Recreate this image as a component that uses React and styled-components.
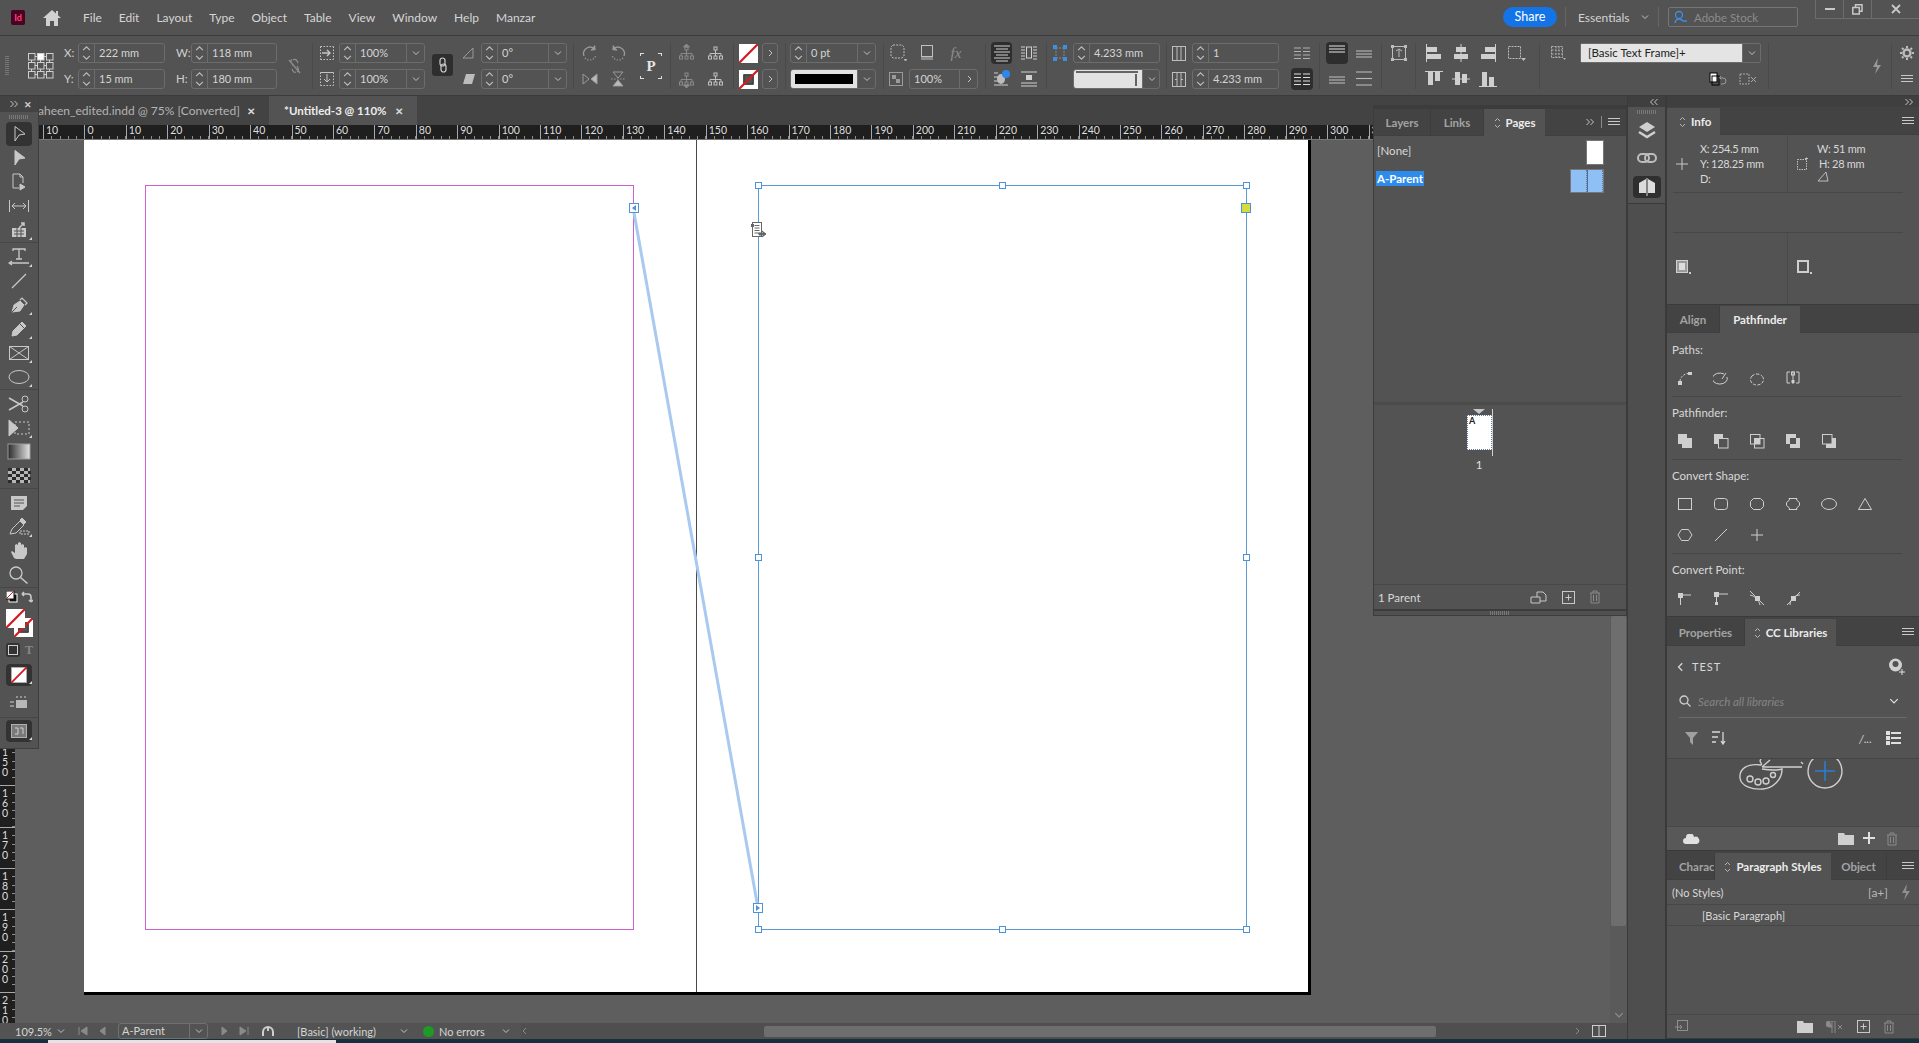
import React from 'react';
import styled, { createGlobalStyle } from 'styled-components';

const GlobalStyle = createGlobalStyle`
  html, body {
    margin: 0;
    background: #535353;
    overflow: hidden;
  }
  * { box-sizing: border-box; }
`;

const UI_FONT = `Lato, "Open Sans", "Liberation Sans", sans-serif`;

/* ---------- small drawing helpers ---------- */

const Ic = ({ w = 18, h = 18, vb, sw = 1, color = 'currentColor', children }) => (
  <svg
    width={w}
    height={h}
    viewBox={vb || `0 0 ${w} ${h}`}
    fill="none"
    stroke={color}
    strokeWidth={sw}
    style={{ display: 'block', flex: 'none' }}
  >
    {children}
  </svg>
);

const Chevron = ({ dir = 'down', size = 8, color = '#c4c4c4' }) => {
  const paths = {
    down: 'M1 2.5l3 3 3-3',
    up: 'M1 5.5l3-3 3 3',
    right: 'M3 1l3 3-3 3',
    left: 'M5 1L2 4l3 3',
  };
  return (
    <Ic w={size} h={size} vb="0 0 8 8" color={color}>
      <path d={paths[dir]} />
    </Ic>
  );
};

const UpDown = () => (
  <Ic w={7} h={12} vb="0 0 7 12" color="#b5b5b5">
    <path d="M1 4l2.5-2.5L6 4M1 8l2.5 2.5L6 8" />
  </Ic>
);

const Burger = () => (
  <Ic w={12} h={9} color="#c8c8c8">
    <path d="M0 .5h12M0 3.5h12M0 6.5h12" />
  </Ic>
);

const Double = ({ left }) => (
  <Ic w={10} h={8} color="#c4c4c4">
    {left ? <path d="M4.5 1L1.5 4l3 3M8.5 1l-3 3 3 3" /> : <path d="M1.5 1l3 3-3 3M5.5 1l3 3-3 3" />}
  </Ic>
);

const NoneSwatch = ({ size = 19, stroke, border = 0 }) => (
  <svg width={size} height={size} viewBox="0 0 20 20" style={{ display: 'block' }}>
    <rect width="20" height="20" fill="#fff" />
    {stroke && <rect x="5" y="5" width="10" height="10" fill="#535353" stroke="#222" />}
    {border > 0 && <rect x=".5" y=".5" width="19" height="19" fill="none" stroke="#999" />}
    <path d="M0 20L20 0" stroke="#cf1f25" strokeWidth="2.4" />
  </svg>
);

/* ---------- menu bar ---------- */

const Root = styled.div`
  width: 1919px;
  height: 1043px;
  display: flex;
  flex-direction: column;
  overflow: hidden;
  background: #535353;
  color: #d2d2d2;
  font-family: ${UI_FONT};
  font-size: 11.5px;
`;

const MenuBar = styled.div`
  height: 35px;
  flex: none;
  display: flex;
  align-items: center;
  padding-left: 11px;
  background: #535353;
`;

const AppLogo = styled.div`
  width: 14px;
  height: 15px;
  border-radius: 2px;
  background: #49021f;
  color: #ff3f7f;
  font-size: 9px;
  font-weight: 700;
  line-height: 15px;
  text-align: center;
`;

const HomeBtn = styled.div`
  margin: 0 22px 0 18px;
`;

const MenuList = styled.div`
  display: flex;
  gap: 17px;
  font-size: 12px;
  color: #d6d6d6;
`;

const MenuRight = styled.div`
  margin-left: auto;
  display: flex;
  align-items: flex-start;
  height: 100%;
`;

const ShareBtn = styled.div`
  width: 54px;
  height: 20px;
  margin-top: 7px;
  border-radius: 10px;
  background: #1473e6;
  color: #fff;
  font-size: 12.5px;
  line-height: 20px;
  text-align: center;
`;

const TopSep = styled.div`
  width: 1px;
  height: 20px;
  margin: 7px ${p => p.$mr}px 0 8px;
  background: #666;
`;

const Workspace = styled.div`
  display: flex;
  align-items: center;
  gap: 11px;
  height: 20px;
  margin-top: 7px;
  width: 72px;
  font-size: 12px;
`;

const StockBox = styled.div`
  width: 130px;
  height: 20px;
  margin: 7px 17px 0 0;
  padding-left: 4px;
  display: flex;
  align-items: center;
  gap: 5px;
  border: 1px solid #757575;
  border-radius: 2px;
  color: #8c8c8c;
  font-size: 11.5px;
`;

const WinControls = styled.div`
  width: 104px;
  height: 19px;
  display: flex;
  border: 1px solid #6d6d6d;
  border-top: none;
  border-right: none;
`;

const WinBtn = styled.div`
  width: ${p => p.$w}px;
  display: flex;
  align-items: center;
  justify-content: center;
  border-right: ${p => (p.$last ? 'none' : '1px solid #6d6d6d')};
`;

/* ---------- control bar ---------- */

const ControlBar = styled.div`
  height: 61px;
  flex: none;
  display: flex;
  padding-top: 7px;
  border-top: 1px solid #3b3b3b;
  border-bottom: 1px solid #3b3b3b;
  background: #535353;
`;

const Col = styled.div`
  flex: none;
  width: ${p => p.$w}px;
  margin-left: ${p => p.$ml || 0}px;
  display: flex;
  flex-direction: column;
  gap: 6px;
`;

const Cell = styled.div`
  height: 20px;
  display: flex;
  align-items: center;
  justify-content: ${p => p.$justify || 'center'};
  gap: ${p => p.$gap || 0}px;
  padding-right: ${p => p.$pr || 0}px;
  color: #c6c6c6;
`;

const Tall = styled.div`
  height: 46px;
  display: flex;
  align-items: center;
  justify-content: center;
  color: #c6c6c6;
`;

const ActiveCell = styled(Cell)`
  height: 22px;
  margin: -1px 0;
  border-radius: 4px;
  background: ${p => (p.$on ? '#2e2e2e' : 'transparent')};
`;

const Sep = styled.div`
  flex: none;
  width: 1px;
  height: 46px;
  margin-left: ${p => p.$ml || 0}px;
  background: #4a4a4a;
`;

const FieldLabel = styled.div`
  height: 20px;
  line-height: 20px;
  font-size: 11.5px;
  color: #cfcfcf;
`;

const Field = styled.div`
  height: 20px;
  display: flex;
  align-items: stretch;
  border: 1px solid #6c6c6c;
  border-radius: 3px;
  color: #d4d4d4;
  font-size: 11px;
  width: ${p => (p.$w ? `${p.$w}px` : 'auto')};
  flex: none;
`;

const Spinner = styled.div`
  width: 16px;
  flex: none;
  display: flex;
  flex-direction: column;
  align-items: center;
  justify-content: center;
  border-right: 1px solid #6c6c6c;
`;

const FieldValue = styled.div`
  flex: 1;
  padding-left: 4px;
  line-height: 18px;
  white-space: nowrap;
  overflow: hidden;
`;

const FieldDrop = styled.div`
  width: 18px;
  flex: none;
  display: flex;
  align-items: center;
  justify-content: center;
  border-left: 1px solid #6c6c6c;
`;

const FieldArrow = styled(FieldDrop)`
  width: 100%;
  border-left: none;
`;

const SwatchWell = styled.div`
  flex: 1;
  display: flex;
  align-items: center;
  background: ${p => p.$bg || '#e2e2e2'};
  padding: ${p => (p.$pad ? '4px 4px' : '0')};
  border-radius: 2px 0 0 2px;
`;

const BlackBar = styled.div`
  width: 100%;
  height: 10px;
  background: #000;
`;

const ChainBtn = styled.div`
  width: 21px;
  height: 22px;
  margin-top: 11px;
  display: flex;
  align-items: center;
  justify-content: center;
  border-radius: 3px;
  background: #2e2e2e;
`;

const GripV = styled.div`
  width: 4px;
  height: 20px;
  margin: 13px 0 0 5px;
  background: repeating-linear-gradient(180deg, #777 0 1px, transparent 1px 2px);
`;

const StyleSelect = styled.div`
  height: 20px;
  display: flex;
  border: 1px solid #6c6c6c;
  border-radius: 2px;
`;

const StyleValue = styled.div`
  flex: 1;
  padding-left: 7px;
  background: #e4e4e4;
  color: #222;
  font-size: 11.5px;
  line-height: 18px;
`;

const FxMark = styled.div`
  width: 18px;
  text-align: center;
  font-family: "Liberation Serif", serif;
  font-style: italic;
  font-size: 15px;
  color: #8f8f8f;
`;

const Spin = () => (
  <Spinner>
    <Chevron dir="up" size={9} color="#bdbdbd" />
    <Chevron dir="down" size={9} color="#bdbdbd" />
  </Spinner>
);

const NumField = ({ value, w = 86, drop }) => (
  <Field $w={w}>
    <Spin />
    <FieldValue>{value}</FieldValue>
    {drop && (
      <FieldDrop>
        <Chevron />
      </FieldDrop>
    )}
  </Field>
);

/* control bar drawings */

const RefPoint = () => (
  <Ic w={26} h={26} color="#cfcfcf">
    {[0, 9, 18].map(y =>
      [0, 9, 18].map(x => (
        <rect key={`${x}${y}`} x={x + 0.5} y={y + 0.5} width="6.5" height="6.5" fill={x === 9 && y === 0 ? '#fff' : 'none'} />
      ))
    )}
    <path d="M7 3.5h2M16 3.5h2M3.5 7v2M12.5 7v2M21.5 7v2M3.5 16v2M12.5 16v2M21.5 16v2M7 12.5h2M16 12.5h2M7 21.5h2M16 21.5h2" />
  </Ic>
);

const BrokenLink = () => (
  <Ic w={16} h={18} color="#8f8f8f" sw={1.2}>
    <path d="M5 2.5c-2 1.5-1 3 1 6M10 15c2-1 2-3 0-6M2 3l11 13" />
    <path d="M6 3c1-1 3-1 4 1l1 2M5 12l1 2c.6 1 2 1.5 3 1" />
  </Ic>
);

const ScaleW = () => (
  <Ic w={14} h={14} color="#c4c4c4">
    <path d="M.5 13.5h13" strokeDasharray="1.5 1.5" />
    <path d="M.5 .5h13M.5 .5v13M13.5 .5v13" strokeDasharray="1.5 1.5" />
    <path d="M2 7h8M7 4l3 3-3 3" strokeWidth="1.4" />
  </Ic>
);

const ScaleH = () => (
  <Ic w={14} h={14} color="#c4c4c4">
    <path d="M.5 13.5h13M.5 .5v13M13.5 .5v13" strokeDasharray="1.5 1.5" />
    <path d="M.5 .5h13M7 2v8M4 7l3 3 3-3" />
  </Ic>
);

const ChainIcon = () => (
  <Ic w={10} h={16} color="#cfcfcf" sw={1.2}>
    <rect x="2" y="1" width="5" height="8" rx="2.5" />
    <rect x="3" y="7" width="5" height="8" rx="2.5" />
  </Ic>
);

const RotateIcon = ({ flip }) => (
  <Ic w={18} h={18} color="#9a9a9a" sw={1.3}>
    <g transform={flip ? 'matrix(-1 0 0 1 18 0)' : undefined}>
      <path d="M3 12a6.5 6.5 0 0 1 10-7.5" />
      <path d="M13.5 1.5l.5 4-4 .5" fill="#9a9a9a" />
      <path d="M4 14a6.5 6.5 0 0 0 11-3" strokeDasharray="1.2 1.6" />
    </g>
  </Ic>
);

const FlipH = () => (
  <Ic w={18} h={16} color="#9a9a9a">
    <path d="M2 3l6 5-6 5z" />
    <path d="M16 3l-6 5 6 5z" fill="#bbb" />
  </Ic>
);

const FlipV = () => (
  <Ic w={16} h={18} color="#9a9a9a">
    <path d="M3 2h10L8 8z" />
    <path d="M3 16h10L8 10z" fill="#bbb" />
    <path d="M1 9h14" strokeDasharray="1.5 1.5" />
  </Ic>
);

const corner = (x, y, w, h) => `linear-gradient(#ddd, #ddd) ${x} ${y} / ${w}px ${h}px no-repeat`;

const PCorners = styled.div`
  width: 22px;
  height: 26px;
  margin-top: 10px;
  display: flex;
  align-items: center;
  justify-content: center;
  color: #e6e6e6;
  font-family: "Liberation Serif", serif;
  font-size: 15px;
  font-weight: 700;
  background:
    ${corner('left', 'top', 4, 1)}, ${corner('left', 'top', 1, 3)},
    ${corner('right', 'top', 4, 1)}, ${corner('right', 'top', 1, 3)},
    ${corner('left', 'bottom', 4, 1)}, ${corner('left', 'bottom', 1, 3)},
    ${corner('right', 'bottom', 4, 1)}, ${corner('right', 'bottom', 1, 3)};
`;

const OrgChart = ({ color = '#8a8a8a', arrow }) => (
  <Ic w={18} h={18} color={color}>
    <rect x="7" y="3" width="3" height="3" />
    <path d="M8.5 6v3M3 12V9.5h11V12M8.5 9.5V12" />
    <rect x="1.5" y="12" width="3" height="3" />
    <rect x="7" y="12" width="3" height="3" />
    <rect x="12.5" y="12" width="3" height="3" />
    {arrow === 'up' && <path d="M5.5 3l3-3 3 3z" fill={color} />}
    {arrow === 'down' && <path d="M5.5 15l3 3 3-3z" fill={color} />}
  </Ic>
);

const CornerIcon = () => (
  <Ic w={18} h={18} color="#bdbdbd">
    <path d="M4 1h9l2 2v9l-2 2H4l-2-2V3z" strokeDasharray="2 1.2" />
    <path d="M15.5 15.5h2L16.5 17z" fill="#bdbdbd" />
  </Ic>
);

const ShadowIcon = () => (
  <Ic w={16} h={18} color="#c0c0c0">
    <rect x="2.5" y="1.5" width="11" height="11" />
    <rect x="2" y="13" width="12" height="3" fill="#8a8a8a" stroke="none" />
  </Ic>
);

const WrapIcon = ({ variant }) => (
  <Ic w={18} h={18} color="#d0d0d0">
    {variant === 'a' && <path d="M1 2h16M3 5h12M1 8h16M3 11h12M1 14h16M3 17h12" />}
    {variant === 'b' && (
      <g>
        <path d="M1 3h4M13 3h4M1 6h4M13 6h4M1 9h4M13 9h4M1 12h4M13 12h4M1 15h4M13 15h4" />
        <rect x="6.5" y="3" width="5" height="11" />
      </g>
    )}
    {variant === 'c' && (
      <g>
        <path d="M1 3h4M1 7h4M1 11h4M1 15h14" />
        <ellipse cx="8" cy="9" rx="4" ry="5" fill="#bdbdbd" stroke="none" />
        <circle cx="13" cy="4" r="4" fill="#2f87e8" stroke="none" />
      </g>
    )}
    {variant === 'd' && (
      <g>
        <path d="M1 2h16M1 16h16M1 13h16" />
        <rect x="6" y="5" width="6" height="5" fill="#d0d0d0" stroke="none" />
      </g>
    )}
  </Ic>
);

const BlueInset = () => (
  <Ic w={16} h={18} color="#888">
    <path d="M4 4h8M4 14h8M4 4v10M12 4v10" strokeDasharray="2 1" />
    {[[1, 1], [1, 13], [11, 1], [11, 13]].map(([x, y]) => (
      <rect key={`${x}${y}`} x={x} y={y} width="4" height="4" fill="#3f8fe0" stroke="none" />
    ))}
  </Ic>
);

const ColumnIcon = ({ gutter }) => (
  <Ic w={14} h={15} color="#bdbdbd">
    <rect x=".5" y=".5" width="13" height="14" />
    {gutter ? (
      <path d="M5 .5v14M9 .5v14M3 7.5h2M9 7.5h2" />
    ) : (
      <path d="M5 .5v14M9 .5v14" />
    )}
  </Ic>
);

const JustifyIcon = ({ filled, lines = 4, spread }) => (
  <Ic w={18} h={16} color={filled ? '#d8d8d8' : '#b8b8b8'} sw={1.1}>
    {Array.from({ length: lines }).map((_, i) => {
      const y = spread ? 1 + (i * 13) / (lines - 1) : filled ? 1 + i * 3 : 6 + i * 3;
      return <path key={i} d={`M1 ${y}h16`} />;
    })}
  </Ic>
);

const ColList = ({ strong }) => (
  <Ic w={16} h={14} color={strong ? '#e0e0e0' : '#b0b0b0'}>
    <path d="M0 2h7M9 2h7M0 5.5h7M9 5.5h7M0 9h7M9 9h7M0 12.5h7M9 12.5h7" />
  </Ic>
);

const FitIcon = () => (
  <Ic w={18} h={18} color="#bdbdbd">
    <rect x="2.5" y="2.5" width="13" height="13" />
    {[[1, 1], [14, 1], [1, 14], [14, 14]].map(([x, y]) => (
      <rect key={`${x}${y}`} x={x} y={y} width="3" height="3" fill="#bdbdbd" stroke="none" />
    ))}
    <path d="M9 5v8M6 7l3-2 3 2" />
  </Ic>
);

const AlignIcon = ({ kind }) => {
  const shapes = {
    left: ['M1.5 0v18', [2, 3, 10, 5], [2, 10, 14, 5]],
    hcenter: ['M9 0v18', [4, 3, 10, 5], [2, 10, 14, 5]],
    right: ['M16.5 0v18', [6, 3, 10, 5], [2, 10, 14, 5]],
    top: ['M0 1.5h18', [3, 2, 5, 13], [10, 2, 5, 9]],
    vcenter: ['M0 9h18', [3, 2, 5, 13], [10, 4, 5, 9]],
    bottom: ['M0 16.5h18', [3, 2, 5, 14], [10, 7, 5, 9]],
  };
  const [line, a, b] = shapes[kind];
  return (
    <Ic w={18} h={18} color="#cfcfcf">
      <path d={line} />
      <rect x={a[0]} y={a[1]} width={a[2]} height={a[3]} fill="#cfcfcf" stroke="none" />
      <rect x={b[0]} y={b[1]} width={b[2]} height={b[3]} fill="#cfcfcf" stroke="none" />
    </Ic>
  );
};

const AlignTo = () => (
  <Ic w={20} h={18} color="#bdbdbd">
    <rect x="2.5" y="2.5" width="12" height="12" strokeDasharray="2 1" />
    <path d="M15 14h5l-2.5 3z" fill="#bdbdbd" stroke="none" />
  </Ic>
);

const DotsIcon = () => (
  <Ic w={16} h={18} color="#b0b0b0">
    <rect x="1.5" y="2.5" width="11" height="11" strokeDasharray="2 1" />
    <path d="M2 6h10M2 10h10M6 3v10M9 3v10" strokeDasharray="1.5 1.5" />
    <path d="M13 14h3l-1.5 2z" fill="#b0b0b0" stroke="none" />
  </Ic>
);

const Bolt = ({ color = '#999' }) => (
  <Ic w={12} h={18} color={color}>
    <path d="M7 1L2 10h4l-2 7 6-9H6z" fill={color} stroke="none" />
  </Ic>
);

const Gear = () => (
  <Ic w={14} h={14} color="#bdbdbd" sw={2.4}>
    <circle cx="7" cy="7" r="3.5" />
    <path d="M7 0v2M7 12v2M0 7h2M12 7h2M2 2l1.5 1.5M10.5 10.5L12 12M12 2l-1.5 1.5M3.5 10.5L2 12" strokeWidth="2" />
  </Ic>
);

/* ---------- document area ---------- */

const Main = styled.div`
  flex: 1;
  min-height: 0;
  display: flex;
  position: relative;
`;

const DocArea = styled.div`
  width: 1627px;
  flex: none;
  display: flex;
  flex-direction: column;
`;

const DocTabs = styled.div`
  height: 29px;
  flex: none;
  display: flex;
  padding-left: 38px;
  background: #434343;
`;

const DocTab = styled.div`
  display: flex;
  align-items: center;
  width: ${p => p.$w}px;
  padding-left: ${p => p.$pl || 0}px;
  font-size: ${p => (p.$active ? 11.5 : 12)}px;
  white-space: nowrap;
  background: ${p => (p.$active ? '#535353' : 'transparent')};
  color: ${p => (p.$active ? '#ececec' : '#b4b4b4')};
  font-weight: ${p => (p.$active ? 700 : 400)};
`;

const TabClose = styled.span`
  margin-left: auto;
  margin-right: ${p => p.$mr}px;
  font-size: 10px;
  font-weight: 700;
  color: #d8d8d8;
`;

const HRuler = styled.div`
  height: 15px;
  flex: none;
  display: flex;
  margin-right: 254px;
  padding-left: 43px;
  overflow: hidden;
  background: #1f1f1f;
  border-bottom: 1px solid #777;
`;

const HTick = styled.div`
  flex: none;
  width: 41.43px;
  padding-left: 2px;
  color: #dedede;
  font-size: 10.5px;
  line-height: 11px;
  border-left: 1px solid #a8a8a8;
  background: repeating-linear-gradient(90deg, transparent 0 7.3px, #8d8d8d 7.3px 8.29px) bottom left / 100% 3px no-repeat;
`;

const CanvasRow = styled.div`
  flex: 1;
  min-height: 0;
  display: flex;
`;

const VRuler = styled.div`
  width: 16px;
  flex: none;
  padding-top: 26px;
  overflow: hidden;
  background: #1f1f1f;
  border-right: 1px solid #5f5f5f;
`;

const VTick = styled.div`
  height: 41.3px;
  padding: 2px 0 0 2px;
  display: flex;
  flex-direction: column;
  color: #dedede;
  font-size: 10.5px;
  line-height: 10px;
  border-top: 1px solid #a8a8a8;
  background: repeating-linear-gradient(180deg, transparent 0 7.3px, #8d8d8d 7.3px 8.26px) top right / 3px 100% no-repeat;
`;

const CanvasArea = styled.div`
  flex: 1;
  min-width: 0;
  overflow: hidden;
  background: #5e5e5e;
`;

const Page = styled.div`
  position: relative;
  width: 1227px;
  height: 855px;
  margin-left: 68px;
  background: #fff;
  border-right: 3px solid #000;
  border-bottom: 3px solid #000;
`;

const Spine = styled.div`
  position: absolute;
  left: 612px;
  top: 0;
  bottom: 0;
  width: 1px;
  background: #4a4a4a;
`;

const Frame = styled.div`
  position: absolute;
  left: ${p => p.$x}px;
  top: 45px;
  width: ${p => p.$w}px;
  height: 745px;
  border: 1px solid ${p => p.$color};
`;

const Handle = styled.div`
  position: absolute;
  left: ${p => p.$x}px;
  top: ${p => p.$y}px;
  width: 7px;
  height: 7px;
  margin: -3px 0 0 -3px;
  background: #fff;
  border: 1px solid #4d93d9;
`;

const Port = styled.div`
  position: absolute;
  left: ${p => p.$x}px;
  top: ${p => p.$y}px;
  width: 10px;
  height: 10px;
  margin: -5px 0 0 -5px;
  background: ${p => p.$bg || '#fff'};
  border: 1px solid #4d93d9;
  display: flex;
  align-items: center;
  justify-content: center;
`;

const ThreadLayer = styled.svg`
  position: absolute;
  left: 0;
  top: 0;
  pointer-events: none;
`;

const CursorMark = styled.div`
  position: absolute;
  left: 667px;
  top: 81px;
`;

const VScroll = styled.div`
  width: 17px;
  flex: none;
  display: flex;
  flex-direction: column;
  align-items: center;
  padding-top: 476px;
  background: #5a5a5a;
`;

const VThumb = styled.div`
  width: 15px;
  height: 310px;
  border-radius: 2px;
  background: #6e6e6e;
`;

const ScrollDown = styled.div`
  margin-top: 84px;
`;

const StatusBar = styled.div`
  height: 16px;
  flex: none;
  display: flex;
  align-items: center;
  background: #535353;
  font-size: 11px;
  color: #d4d4d4;
`;

const StatusText = styled.div`
  flex: none;
  width: ${p => p.$w}px;
  margin-left: ${p => p.$ml || 0}px;
  white-space: nowrap;
`;

const StatusIcon = styled.div`
  flex: none;
  margin-left: ${p => p.$ml || 0}px;
`;

const PageSelect = styled.div`
  width: 90px;
  height: 16px;
  margin-left: 11px;
  flex: none;
  display: flex;
  border: 1px solid #707070;
  border-radius: 3px;
`;

const PageSelectText = styled.div`
  flex: 1;
  padding-left: 3px;
  line-height: 14px;
`;

const PageSelectDrop = styled.div`
  width: 18px;
  display: flex;
  align-items: center;
  justify-content: center;
  border-left: 1px solid #707070;
`;

const GreenDot = styled.div`
  width: 11px;
  height: 11px;
  margin-left: 15px;
  flex: none;
  border-radius: 50%;
  background: #1e9a25;
`;

const HScroll = styled.div`
  flex: 1;
  height: 100%;
  margin-left: 11px;
  display: flex;
  align-items: center;
  background: #4f4f4f;
`;

const HThumb = styled.div`
  width: 672px;
  height: 11px;
  margin-left: 235px;
  border-radius: 2px;
  background: #6e6e6e;
`;

const BottomEdge = styled.div`
  height: 4px;
  flex: none;
  padding: 1px 0 0 48px;
  background: #14303f;
`;

const EdgeWhite = styled.div`
  width: 288px;
  height: 3px;
  background: #e4e4e4;
`;

/* ---------- tools panel ---------- */

const ToolPanel = styled.div`
  position: absolute;
  left: 0;
  top: 0;
  width: 39px;
  height: 653px;
  display: flex;
  flex-direction: column;
  background: #535353;
  border-right: 1px solid #3f3f3f;
  border-bottom: 1px solid #3f3f3f;
`;

const ToolHead = styled.div`
  height: 16px;
  flex: none;
  display: flex;
  align-items: center;
  justify-content: space-between;
  padding: 0 6px 0 9px;
  background: #434343;
  color: #ccc;
  font-size: 9px;
  font-weight: 700;
`;

const Grip = styled.div`
  width: ${p => p.$w || 20}px;
  height: ${p => p.$h || 4}px;
  margin: ${p => p.$m || '3px auto'};
  flex: none;
  background: repeating-linear-gradient(90deg, #787878 0 1px, transparent 1px 2px);
`;

const ToolGroup = styled.div`
  flex: none;
  padding-top: ${p => p.$pt ?? 2}px;
  border-bottom: 1px solid #474747;
`;

const Tool = styled.div`
  position: relative;
  height: ${p => p.$h || 24}px;
  margin: ${p => p.$mt || 0}px 6px 0;
  display: flex;
  align-items: center;
  justify-content: center;
  border-radius: 4px;
  color: #c8c8c8;
  background: ${p => (p.$active ? '#333' : 'transparent')};
  &::after {
    content: '';
    display: ${p => (p.$fly ? 'block' : 'none')};
    position: absolute;
    right: 0;
    bottom: 2px;
    border-left: 3px solid transparent;
    border-bottom: 3px solid #d8d8d8;
  }
`;

const DefaultsRow = styled.div`
  height: 17px;
  flex: none;
  display: flex;
  align-items: center;
  justify-content: space-between;
  padding: 1px 5px 0 6px;
`;

const SwatchStack = styled.div`
  position: relative;
  height: 28px;
  margin: 4px 5px 0 6px;
  flex: none;
`;

const FillChip = styled.div`
  position: absolute;
  left: 0;
  top: 0;
  z-index: 1;
`;

const StrokeChip = styled.div`
  position: absolute;
  right: 0;
  bottom: 0;
`;

const ModeRow = styled.div`
  display: flex;
  align-items: center;
  justify-content: space-between;
  margin: 6px 5px 7px 6px;
  flex: none;
`;

const ModeBtn = styled.div`
  width: 14px;
  height: 14px;
  display: flex;
  align-items: center;
  justify-content: center;
  border-radius: 3px;
  background: #333;
`;

const GhostT = styled.span`
  font-family: "Liberation Serif", serif;
  font-weight: 700;
  font-size: 12px;
  line-height: 14px;
  color: #878787;
`;

/* ---------- panels ---------- */

const Dock = styled.div`
  width: 40px;
  flex: none;
  display: flex;
  flex-direction: column;
  background: #4e4e4e;
  border-left: 1px solid #3a3a3a;
  border-right: 2px solid #3a3a3a;
`;

const DockStrip = styled.div`
  height: 11px;
  flex: none;
  display: flex;
  align-items: center;
  justify-content: flex-end;
  padding-right: ${p => p.$pr || 4}px;
  background: #3f3f3f;
`;

const DockGroup = styled.div`
  height: 97px;
  flex: none;
  display: flex;
  flex-direction: column;
  align-items: center;
  background: #535353;
  border-bottom: 1px solid #3a3a3a;
`;

const DockBtn = styled.div`
  width: 28px;
  height: ${p => p.$h || 28}px;
  margin-top: ${p => p.$mt || 0}px;
  flex: none;
  display: flex;
  align-items: center;
  justify-content: center;
  border-radius: 4px;
  background: ${p => (p.$active ? '#2f2f2f' : 'transparent')};
`;

const RightCol = styled.div`
  width: 252px;
  flex: none;
  display: flex;
  flex-direction: column;
`;

const Panel = styled.div`
  flex: ${p => (p.$h ? 'none' : 1)};
  height: ${p => (p.$h ? `${p.$h}px` : 'auto')};
  min-height: 0;
  display: flex;
  flex-direction: column;
  overflow: hidden;
  background: #535353;
  border-bottom: 1px solid #3a3a3a;
`;

const PanelTabs = styled.div`
  flex: none;
  display: flex;
  align-items: stretch;
  padding-top: ${p => p.$pt ?? 1}px;
  background: #434343;
  border-bottom: 1px solid #3f3f3f;
`;

const PanelTab = styled.div`
  width: ${p => p.$w}px;
  flex: none;
  display: flex;
  align-items: center;
  justify-content: ${p => (p.$left ? 'flex-start' : 'center')};
  gap: 5px;
  overflow: hidden;
  padding-left: ${p => (p.$left ? '12px' : '0')};
  font-size: 11.5px;
  font-weight: 700;
  white-space: nowrap;
  color: ${p => (p.$active ? '#ececec' : '#a3a3a3')};
  background: ${p => (p.$active ? '#535353' : 'transparent')};
  border-right: ${p => (p.$active ? 'none' : '1px solid #3d3d3d')};
  margin-bottom: ${p => (p.$active ? '-1px' : '0')};
  height: ${p => (p.$active ? '27px' : '26px')};
`;

const TabTools = styled.div`
  margin-left: auto;
  display: flex;
  align-items: center;
  gap: 6px;
  padding-right: ${p => p.$pr || 5}px;
`;

const TabToolSep = styled.div`
  width: 1px;
  height: 12px;
  background: #8a8a8a;
`;

/* info */

const InfoGrid = styled.div`
  flex: 1;
  display: grid;
  grid-template-columns: 121px 131px;
  grid-template-rows: 57px 41px 1fr;
`;

const InfoCell = styled.div`
  display: flex;
  align-items: center;
  padding: 0 0 ${p => p.$pb || 0}px 9px;
  border-right: ${p => (p.$right ? '1px solid #4b4b4b' : 'none')};
`;

const InfoRule = styled.div`
  grid-column: 1 / 3;
  margin: 0 16px 0 6px;
  border-top: 1px solid #474747;
  border-bottom: 1px solid #474747;
`;

const InfoLines = styled.div`
  margin-left: ${p => p.$ml}px;
  font-size: 11px;
  letter-spacing: -0.3px;
  line-height: 15px;
  color: #d8d8d8;
`;

const InfoLine = styled.div`
  padding-left: ${p => p.$pl || 0}px;
  min-height: 15px;
`;

/* pathfinder */

const Section = styled.div`
  flex: none;
  width: 230px;
  margin-left: 5px;
  padding: 9px 0 4px;
  border-bottom: ${p => (p.$last ? 'none' : '1px solid #474747')};
  &:nth-child(2) { padding-top: 10px; }
`;

const SectionLabel = styled.div`
  height: 14px;
  line-height: 14px;
  font-size: 11.5px;
  color: #d8d8d8;
  margin-bottom: 7px;
`;

const IconRow = styled.div`
  display: grid;
  grid-template-columns: repeat(6, 36px);
  margin: ${p => p.$mt || 0}px 0 0 -5px;
  height: 28px;
`;

const IconCell = styled.div`
  display: flex;
  align-items: center;
  justify-content: center;
  color: #c8c8c8;
`;

/* libraries */

const LibHead = styled.div`
  height: 41px;
  flex: none;
  display: flex;
  align-items: center;
  padding: 0 14px 0 9px;
  font-size: 11px;
  letter-spacing: 1px;
  color: #d8d8d8;
`;

const LibBack = styled.span`
  margin-right: 6px;
`;

const LibUser = styled.div`
  margin-left: auto;
`;

const LibSearch = styled.div`
  height: 31px;
  flex: none;
  display: flex;
  align-items: center;
  gap: 7px;
  margin: 0 12px;
  padding: 0 8px 2px 0;
  border-bottom: 1px solid #6a6a6a;
  font-size: 11.5px;
  font-style: italic;
  color: #858585;
`;

const LibSearchDrop = styled.div`
  margin-left: auto;
`;

const LibTools = styled.div`
  height: 41px;
  flex: none;
  display: flex;
  align-items: center;
  padding: 0 18px 0 18px;
  gap: 14px;
  color: #cfcfcf;
  border-bottom: 1px solid #454545;
`;

const LibSortName = styled.div`
  margin-left: auto;
  font-size: 11.5px;
  font-style: italic;
`;

const LibEmpty = styled.div`
  height: 67px;
  flex: none;
  padding-left: 70px;
  overflow: hidden;
  background: #505050;
`;

const PanelFoot = styled.div`
  flex: none;
  height: ${p => p.$h || 24}px;
  display: flex;
  align-items: center;
  margin-top: ${p => (p.$auto ? 'auto' : '0')};
  padding: 0 ${p => p.$pr || 16}px 0 ${p => p.$pl || 14}px;
  gap: ${p => p.$gap || 12}px;
  background: ${p => p.$bg || 'transparent'};
  border-top: 1px solid #484848;
  color: #c8c8c8;
`;

const FootSpacer = styled.div`
  margin-left: auto;
`;

/* paragraph styles */

const StyleRow = styled.div`
  height: ${p => p.$h}px;
  flex: none;
  display: flex;
  align-items: center;
  padding-left: ${p => p.$pl}px;
  padding-right: 7px;
  font-size: 11px;
  color: #d8d8d8;
  border-bottom: 1px solid #474747;
`;

const StyleTools = styled.div`
  margin-left: auto;
  display: flex;
  align-items: center;
  gap: 12px;
  color: #b8b8b8;
  font-size: 12px;
`;

/* pages panel */

const PagesPanel = styled.div`
  position: absolute;
  left: 1373px;
  top: 9px;
  width: 254px;
  height: 511px;
  display: flex;
  flex-direction: column;
  background: #535353;
  border-top: 4px solid #3c3c3c;
  border-left: 1px solid #3c3c3c;
  border-right: 1px solid #3c3c3c;
`;

const ParentList = styled.div`
  height: 269px;
  flex: none;
  padding: 4px 22px 0 2px;
  display: flex;
  flex-direction: column;
  gap: 3px;
  border-bottom: 3px solid #4b4b4b;
`;

const ParentRow = styled.div`
  display: flex;
  justify-content: space-between;
  align-items: flex-start;
  height: ${p => p.$h}px;
`;

const ParentName = styled.div`
  margin-top: ${p => p.$mt}px;
  padding: 0 0 0 1px;
  width: ${p => (p.$sel ? '48px' : 'auto')};
  height: 15px;
  line-height: 15px;
  font-size: 11.5px;
  font-weight: ${p => (p.$sel ? 700 : 400)};
  color: ${p => (p.$sel ? '#fff' : '#d8d8d8')};
  background: ${p => (p.$sel ? '#2d8ceb' : 'transparent')};
`;

const WhiteSwatch = styled.div`
  width: 18px;
  height: 25px;
  background: #fff;
  border: 1px solid #777;
`;

const ParentSwatch = styled.div`
  width: 34px;
  height: 24px;
  display: flex;
  gap: 1px;
  background: #5a6a7a;
  border: 1px solid #777;
`;

const ParentHalf = styled.div`
  flex: 1;
  background: #8fc0f5;
  border-right: 1px dotted #5a83b8;
`;

const ThumbArea = styled.div`
  flex: 1;
  padding: 4px 0 0 93px;
`;

const ThumbSpread = styled.div`
  width: 26px;
  height: 47px;
  border-right: 1px solid #d0d0d0;
  display: flex;
  flex-direction: column;
`;

const ThumbMarker = styled.div`
  width: 0;
  height: 0;
  margin: 0 0 1px 6px;
  border-left: 6px solid transparent;
  border-right: 6px solid transparent;
  border-top: 5px solid #c8c8c8;
`;

const ThumbPage = styled.div`
  width: 25px;
  height: 35px;
  padding-left: 1px;
  background: #fff;
  border: 1px dotted #5d7fa8;
  color: #222;
  font-size: 9px;
  font-weight: 700;
  line-height: 10px;
`;

const ThumbNumber = styled.div`
  width: 24px;
  margin-top: 2px;
  text-align: center;
  font-size: 11.5px;
  line-height: 14px;
  color: #e0e0e0;
`;

const PagesFootText = styled.div`
  font-size: 11.5px;
  color: #d8d8d8;
`;

const PagesHandle = styled.div`
  height: 7px;
  flex: none;
  display: flex;
  align-items: center;
  justify-content: center;
  background: #505050;
  border-top: 2px solid #3c3c3c;
  border-bottom: 1px solid #3c3c3c;
`;

/* ---------- tool glyphs ---------- */

const G = ({ children, color = '#c8c8c8', w = 20, h = 20 }) => (
  <Ic w={w} h={h} color={color}>
    {children}
  </Ic>
);

const ToolIcons = {
  select: <G><path d="M6 2.5L16 10l-6 1-4 6z" /></G>,
  direct: <G><path d="M6 2.5L16 10l-6 1-4 6z" fill="#c8c8c8" /></G>,
  page: <G><path d="M4 2h7l3 3v6M4 2v14h6M11 2v3h3" /><path d="M11 12l5 3-5 3z" fill="#c8c8c8" /></G>,
  gap: <G w={24}><path d="M2.5 4v12M21.5 4v12M5 10h14" /><path d="M8 7l-3 3 3 3M16 7l3 3-3 3" /></G>,
  collector: (
    <G>
      <rect x="3" y="8" width="14" height="9" fill="#c8c8c8" stroke="none" />
      <path d="M5 11h10M5 14h10M8 8v9M12 8v9" stroke="#535353" />
      <path d="M10 8l5-5M12 3h3v3" strokeWidth="1.5" />
    </G>
  ),
  type: <G w={22}><path d="M5 4V2h12v2M11 2v10M8 12h6M1 16h20M4 14l-3 2 3 2" strokeWidth="1.3" /></G>,
  line: <G><path d="M3 17L17 3" strokeWidth="1.2" /></G>,
  pen: (
    <G>
      <path d="M3 17l2-7 6-4 4 4-4 6z" fill="#c8c8c8" />
      <path d="M3 17l5-5" stroke="#535353" />
      <path d="M11 5l2-2 5 5-2 2" strokeWidth="1.2" />
    </G>
  ),
  pencil: <G><path d="M3 17l1-5 9-9 4 4-9 9z" fill="#c8c8c8" /><path d="M11 5l4 4" stroke="#535353" /></G>,
  frame: <G w={24}><rect x="2.5" y="3.5" width="19" height="13" /><path d="M2.5 3.5l19 13M21.5 3.5l-19 13" /></G>,
  ellipse: <G w={24}><ellipse cx="12" cy="10" rx="10" ry="6.5" /></G>,
  scissors: (
    <G w={24}>
      <circle cx="18" cy="5" r="3" />
      <circle cx="18" cy="15" r="3" />
      <path d="M2 4l14 8M2 16l14-8" strokeWidth="1.5" />
    </G>
  ),
  transform: (
    <G w={24}>
      <rect x="8" y="4" width="14" height="12" strokeDasharray="2 2" />
      <path d="M2 2l9 8-9 8z" fill="#c8c8c8" />
    </G>
  ),
  gradient: (
    <svg width="24" height="18" viewBox="0 0 24 18" style={{ display: 'block' }}>
      <defs>
        <linearGradient id="toolGrad">
          <stop offset="0" stopColor="#2a2a2a" />
          <stop offset="1" stopColor="#e5e5e5" />
        </linearGradient>
      </defs>
      <rect x="1" y="1" width="22" height="15" fill="url(#toolGrad)" stroke="#999" />
    </svg>
  ),
  feather: (
    <svg width="24" height="18" viewBox="0 0 24 18" style={{ display: 'block' }}>
      <rect x="1" y="1" width="22" height="15" fill="#b5b5b5" />
      {Array.from({ length: 30 }).map((_, i) => {
        const col = i % 6;
        const row = Math.floor(i / 6);
        return (col + row) % 2 === 0 ? (
          <rect key={i} x={1 + col * 4} y={1 + row * 3} width="4" height="3" fill="#2c2c2c" />
        ) : null;
      })}
    </svg>
  ),
  note: (
    <G>
      <path d="M2 3h16v10l-4 4H2z" fill="#c8c8c8" stroke="none" />
      <path d="M5 7h10M5 10h10M5 13h6" stroke="#535353" />
    </G>
  ),
  eyedropper: (
    <G w={24}>
      <path d="M3 17l2-5 8-8 4 4-8 8z" />
      <path d="M13 3l2-2 4 4-2 2z" fill="#c8c8c8" />
      <path d="M13 14h9v3h-9z" strokeDasharray="2 1" />
    </G>
  ),
  hand: (
    <G>
      <path d="M5 17l-3-6 1-1 3 2V4l1.5-1L9 4v5-7l1.5-1L12 2v7-5l1.5-1L15 4v6-3l1.5-1L18 7v6l-3 5H7z" fill="#c8c8c8" stroke="none" />
    </G>
  ),
  zoom: <G w={22}><circle cx="8" cy="8" r="6" strokeWidth="1.3" /><path d="M12.5 12.5l7 6" strokeWidth="1.6" /></G>,
};

const toolGroups = [
  [['select', 0, 1], ['direct'], ['page'], ['gap'], ['collector', 1]],
  [['type', 1], ['line'], ['pen', 1], ['pencil', 1], ['frame', 1], ['ellipse', 1]],
  [['scissors'], ['transform', 1], ['gradient'], ['feather']],
  [['note'], ['eyedropper', 1], ['hand'], ['zoom']],
];

const PfIcon = ({ kind }) => {
  const c = '#cfcfcf';
  return (
    <Ic w={16} h={16} color={c}>
      {kind === 'add' && <path d="M1 1h9v4h5v10H5v-4H1z" fill={c} stroke="none" />}
      {kind === 'sub' && (
        <g>
          <path d="M1 1h9v4H5v6H1z" fill={c} stroke="none" />
          <rect x="5.5" y="5.5" width="9.5" height="9.5" />
        </g>
      )}
      {kind === 'int' && (
        <g>
          <rect x="1.5" y="1.5" width="9.5" height="9.5" />
          <rect x="5.5" y="5.5" width="9.5" height="9.5" />
          <rect x="5.5" y="5.5" width="5.5" height="5.5" fill={c} stroke="none" />
        </g>
      )}
      {kind === 'exc' && <path d="M1 1h10v4H5v6H1zM11 5h4v10H5v-4h6z" fill={c} stroke="none" />}
      {kind === 'back' && (
        <g>
          <rect x="1.5" y="1.5" width="9.5" height="9.5" />
          <path d="M11 5h4v10H5v-4h6z" fill={c} stroke="none" />
        </g>
      )}
      {kind === 'rect' && <rect x="1.5" y="2.5" width="13" height="11" />}
      {kind === 'round' && <rect x="1.5" y="2.5" width="13" height="11" rx="3" />}
      {kind === 'bevel' && <path d="M4.5 2.5h7l3 3v5l-3 3h-7l-3-3v-5z" />}
      {kind === 'inverse' && <path d="M4 2.5h8l-.5 1.5 3 2.5v3l-3 2.5.5 1.5H4l.5-1.5-3-2.5v-3l3-2.5z" />}
      {kind === 'ellipse' && <ellipse cx="8" cy="8" rx="7.5" ry="5.5" />}
      {kind === 'tri' && <path d="M8 2.5l6.5 11h-13z" />}
      {kind === 'hex' && <path d="M4.5 2.5h7L15 8l-3.5 5.5h-7L1 8z" />}
      {kind === 'line' && <path d="M2 14L14 2" />}
      {kind === 'plus' && <path d="M8 2v12M2 8h12" />}
      {kind === 'join' && (
        <g>
          <rect x="1" y="11" width="4" height="4" fill={c} stroke="none" />
          <rect x="11" y="2" width="4" height="3" fill={c} stroke="none" />
          <path d="M3 11c0-3 3-7 8-7.5" strokeDasharray="2 1.5" />
        </g>
      )}
      {kind === 'open' && <path d="M11 4a7.5 5.5 0 1 0 3 3M9 9l4-6" />}
      {kind === 'close' && <path d="M3 6a6.5 5.5 0 1 0 10 0M3 6a6.5 5.5 0 0 1 10 0" strokeDasharray="3 1.5" />}
      {kind === 'rev' && (
        <g>
          <path d="M5 2H2v11h3M11 2h3v11h-3M8 1v13" />
          <rect x="6.5" y="10" width="3" height="3" fill={c} stroke="none" />
          <rect x="6.5" y="2" width="3" height="3" />
        </g>
      )}
      {kind === 'p1' && (
        <g>
          <rect x="1" y="3" width="5" height="5" fill={c} stroke="none" />
          <path d="M6 5h8M3.5 8v7" />
        </g>
      )}
      {kind === 'p2' && (
        <g>
          <rect x="1" y="2" width="5" height="5" fill={c} stroke="none" />
          <rect x="2" y="12" width="3" height="3" fill={c} stroke="none" />
          <path d="M6 4h9M3.5 7v5" />
        </g>
      )}
      {kind === 'p3' && (
        <g>
          <rect x="6" y="6" width="5" height="5" fill={c} stroke="none" />
          <path d="M1 1l14 14M1 5c5 1 9 5 10 10" />
        </g>
      )}
      {kind === 'p4' && (
        <g>
          <rect x="6" y="6" width="5" height="5" fill={c} stroke="none" />
          <path d="M15 2L2 15M15 5c-5 0-10 4-10 10" />
        </g>
      )}
    </Ic>
  );
};

const Trash = ({ color = '#8a8a8a' }) => (
  <Ic w={12} h={14} color={color}>
    <path d="M1 3h10M4 3V1h4v2M2 3v10h8V3M4.5 5v6M7.5 5v6" />
  </Ic>
);

const Folder = () => (
  <Ic w={16} h={13} color="#cfcfcf">
    <path d="M0 1h6l1 2h9v10H0z" fill="#cfcfcf" stroke="none" />
  </Ic>
);

const NewPage = () => (
  <Ic w={13} h={13} color="#c8c8c8">
    <rect x=".5" y=".5" width="12" height="12" />
    <path d="M6.5 3.5v6M3.5 6.5h6" />
  </Ic>
);

const Cursor = () => (
  <Ic w={16} h={18} color="#666">
    <rect x="1.5" y="1.5" width="9" height="14" fill="#fff" />
    <path d="M3.5 4.5h5M3.5 7h5M3.5 9.5h5M3.5 12h5" />
    <rect x="0" y="3" width="3" height="3" fill="#666" stroke="none" />
    <path d="M8 12h5l-2-2 4 3-4 3 2-2H8z" fill="#666" />
  </Ic>
);

const hLabels = Array.from({ length: 33 }, (_, i) => (i === 0 ? 10 : (i - 1) * 10));
const vLabels = Array.from({ length: 22 }, (_, i) => (i + 1) * 10);
const menuItems = ['File', 'Edit', 'Layout', 'Type', 'Object', 'Table', 'View', 'Window', 'Help', 'Manzar'];

export default function App() {
  return (
    <Root>
      <GlobalStyle />

      <MenuBar>
        <AppLogo>Id</AppLogo>
        <HomeBtn>
          <Ic w={18} h={16} color="#d0d0d0">
            <path d="M9 0L0 8h3v8h4v-5h4v5h4V8h3l-3-2.7V1h-2v2.5z" fill="#d0d0d0" stroke="none" />
          </Ic>
        </HomeBtn>
        <MenuList>
          {menuItems.map(m => (
            <span key={m}>{m}</span>
          ))}
        </MenuList>
        <MenuRight>
          <ShareBtn>Share</ShareBtn>
          <TopSep $mr={12} />
          <Workspace>
            Essentials
            <Chevron />
          </Workspace>
          <TopSep $mr={9} />
          <StockBox>
            <Ic w={16} h={14} color="#3a8fe8" sw={1.3}>
              <circle cx="6" cy="5" r="3.5" />
              <path d="M2 13c.5-3 2-4 4-4s3 1 4 2h4" />
            </Ic>
            Adobe Stock
          </StockBox>
          <WinControls>
            <WinBtn $w={28}>
              <Ic w={10} h={4} color="#c8c8c8" sw={2}>
                <path d="M0 2h10" />
              </Ic>
            </WinBtn>
            <WinBtn $w={28}>
              <Ic w={11} h={11} color="#c8c8c8" sw={1.5}>
                <rect x=".8" y="3.5" width="6.5" height="6.5" />
                <path d="M3.5 3.5V.8H10v6.5H7.5" />
              </Ic>
            </WinBtn>
            <WinBtn $w={47} $last>
              <Ic w={10} h={10} color="#c8c8c8" sw={1.8}>
                <path d="M1 1l8 8M9 1L1 9" />
              </Ic>
            </WinBtn>
          </WinControls>
        </MenuRight>
      </MenuBar>

      <ControlBar>
        <GripV />
        <Col $ml={19} $w={25}><Tall><RefPoint /></Tall></Col>
        <Col $ml={11} $w={14}>
          <FieldLabel>X:</FieldLabel>
          <FieldLabel>Y:</FieldLabel>
        </Col>
        <Col $w={87}>
          <NumField value="222 mm" w={87} />
          <NumField value="15 mm" w={87} />
        </Col>
        <Col $ml={11} $w={15}>
          <FieldLabel>W:</FieldLabel>
          <FieldLabel>H:</FieldLabel>
        </Col>
        <Col $w={86}>
          <NumField value="118 mm" />
          <NumField value="180 mm" />
        </Col>
        <Col $ml={9} $w={18}><Tall><BrokenLink /></Tall></Col>
        <Sep $ml={8} />
        <Col $ml={6} $w={16}>
          <Cell><ScaleW /></Cell>
          <Cell><ScaleH /></Cell>
        </Col>
        <Col $ml={4} $w={86}>
          <NumField value="100%" drop />
          <NumField value="100%" drop />
        </Col>
        <Col $ml={7} $w={21}><ChainBtn><ChainIcon /></ChainBtn></Col>
        <Col $ml={8} $w={16}>
          <Cell>
            <Ic w={14} h={12} color="#9a9a9a"><path d="M1 11L11 1v10z" /></Ic>
          </Cell>
          <Cell>
            <Ic w={14} h={12} color="#bcbcbc"><path d="M4 1h9l-3 10H1z" fill="#bcbcbc" stroke="none" /></Ic>
          </Cell>
        </Col>
        <Col $ml={4} $w={86}>
          <NumField value="0°" drop />
          <NumField value="0°" drop />
        </Col>
        <Sep $ml={6} />
        <Col $ml={7} $w={18}>
          <Cell><RotateIcon /></Cell>
          <Cell><FlipH /></Cell>
        </Col>
        <Col $ml={10} $w={18}>
          <Cell><RotateIcon flip /></Cell>
          <Cell><FlipV /></Cell>
        </Col>
        <Col $ml={13} $w={22}><PCorners>P</PCorners></Col>
        <Sep $ml={8} />
        <Col $ml={8} $w={16}>
          <Cell><OrgChart arrow="up" /></Cell>
          <Cell><OrgChart arrow="down" /></Cell>
        </Col>
        <Col $ml={12} $w={18}>
          <Cell><OrgChart color="#c0c0c0" /></Cell>
          <Cell><OrgChart color="#c0c0c0" /></Cell>
        </Col>
        <Sep $ml={8} />
        <Col $ml={5} $w={19}>
          <Cell><NoneSwatch size={19} /></Cell>
          <Cell><NoneSwatch size={19} stroke /></Cell>
        </Col>
        <Col $ml={4} $w={16}>
          <Field $w={16}><FieldArrow><Chevron dir="right" /></FieldArrow></Field>
          <Field $w={16}><FieldArrow><Chevron dir="right" /></FieldArrow></Field>
        </Col>
        <Sep $ml={7} />
        <Col $ml={4} $w={86}>
          <NumField value="0 pt" drop />
          <Field $w={86}>
            <SwatchWell $pad><BlackBar /></SwatchWell>
            <FieldDrop><Chevron /></FieldDrop>
          </Field>
        </Col>
        <Sep $ml={7} />
        <Col $ml={5} $w={90}>
          <Cell $justify="flex-start" $gap={12}>
            <CornerIcon />
            <ShadowIcon />
            <FxMark>fx</FxMark>
          </Cell>
          <Cell $justify="flex-start" $gap={6}>
            <Ic w={14} h={14} color="#9a9a9a">
              <rect x=".5" y=".5" width="13" height="13" />
              <path d="M3 3h4v4H3zM7 7h4v4H7z" fill="#9a9a9a" stroke="none" />
            </Ic>
            <Field $w={69}>
              <FieldValue>100%</FieldValue>
              <FieldDrop><Chevron dir="right" /></FieldDrop>
            </Field>
          </Cell>
        </Col>
        <Sep $ml={6} />
        <Col $ml={5} $w={21}>
          <ActiveCell $on><WrapIcon variant="a" /></ActiveCell>
          <Cell><WrapIcon variant="c" /></Cell>
        </Col>
        <Col $ml={8} $w={18}>
          <Cell><WrapIcon variant="b" /></Cell>
          <Cell><WrapIcon variant="d" /></Cell>
        </Col>
        <Sep $ml={8} />
        <Col $ml={5} $w={16}><Cell><BlueInset /></Cell></Col>
        <Col $ml={5} $w={87}>
          <NumField value="4.233 mm" w={87} />
          <Field $w={87}>
            <SwatchWell $bg="#e2e2e2">
              <Ic w={68} h={18} color="#3a3a3a">
                <path d="M2 2h62M62 4v12" strokeWidth="1.5" />
              </Ic>
            </SwatchWell>
            <FieldDrop><Chevron /></FieldDrop>
          </Field>
        </Col>
        <Sep $ml={6} />
        <Col $ml={5} $w={14}>
          <Cell><ColumnIcon /></Cell>
          <Cell><ColumnIcon gutter /></Cell>
        </Col>
        <Col $ml={6} $w={87}>
          <NumField value="1" w={87} />
          <NumField value="4.233 mm" w={87} />
        </Col>
        <Col $ml={12} $w={22}>
          <Cell><ColList /></Cell>
          <ActiveCell $on><ColList strong /></ActiveCell>
        </Col>
        <Sep $ml={6} />
        <Col $ml={6} $w={22}>
          <ActiveCell $on><JustifyIcon filled lines={3} /></ActiveCell>
          <Cell><JustifyIcon lines={3} /></Cell>
        </Col>
        <Col $ml={7} $w={18}>
          <Cell><JustifyIcon lines={3} /></Cell>
          <Cell><JustifyIcon lines={3} spread /></Cell>
        </Col>
        <Sep $ml={8} />
        <Col $ml={8} $w={18}><Cell><FitIcon /></Cell></Col>
        <Sep $ml={7} />
        <Col $ml={9} $w={18}>
          <Cell><AlignIcon kind="left" /></Cell>
          <Cell><AlignIcon kind="top" /></Cell>
        </Col>
        <Col $ml={9} $w={18}>
          <Cell><AlignIcon kind="hcenter" /></Cell>
          <Cell><AlignIcon kind="vcenter" /></Cell>
        </Col>
        <Col $ml={9} $w={18}>
          <Cell><AlignIcon kind="right" /></Cell>
          <Cell><AlignIcon kind="bottom" /></Cell>
        </Col>
        <Col $ml={10} $w={18}><Cell><AlignTo /></Cell></Col>
        <Sep $ml={14} />
        <Col $ml={9} $w={18}><Cell><DotsIcon /></Cell></Col>
        <Col $ml={13} $w={181}>
          <StyleSelect>
            <StyleValue>[Basic Text Frame]+</StyleValue>
            <FieldDrop><Chevron /></FieldDrop>
          </StyleSelect>
          <Cell $justify="flex-end" $gap={12} $pr={4}>
            <Ic w={18} h={14} color="#e0e0e0">
              <rect x="1" y="1" width="7" height="9" fill="#fff" stroke="#000" />
              <rect x="3" y="4" width="7" height="9" stroke="#000" />
              <path d="M12 4l-1.5 2 2 1M11 6h3a3 3 0 0 1 0 6h-2" stroke="#9a9a9a" />
            </Ic>
            <Ic w={18} h={14} color="#a8a8a8">
              <rect x="1" y="2" width="9" height="10" strokeDasharray="2 1" />
              <path d="M12 5l5 5M17 5l-5 5" />
            </Ic>
          </Cell>
        </Col>
        <Sep $ml={7} />
        <Col $ml={100} $w={16}><Tall><Bolt /></Tall></Col>
        <Sep $ml={6} />
        <Col $ml={7} $w={16}>
          <Cell><Gear /></Cell>
          <Cell><Burger /></Cell>
        </Col>
      </ControlBar>

      <Main>
        <DocArea>
          <DocTabs>
            <DocTab $w={231}>
              aheen_edited.indd @ 75% [Converted]
              <TabClose $mr={14}>✕</TabClose>
            </DocTab>
            <DocTab $w={148} $pl={15} $active>
              *Untitled-3 @ 110%
              <TabClose $mr={14}>✕</TabClose>
            </DocTab>
          </DocTabs>
          <HRuler>
            {hLabels.map((n, i) => (
              <HTick key={i}>{n}</HTick>
            ))}
          </HRuler>
          <CanvasRow>
            <VRuler>
              {vLabels.map(n => (
                <VTick key={n}>
                  {n >= 150 && String(n).split('').map((d, i) => (
                    <span key={i}>{d}</span>
                  ))}
                </VTick>
              ))}
            </VRuler>
            <CanvasArea>
              <Page>
                <Spine />
                <Frame $x={61} $w={489} $color="#d05fd0" />
                <Frame $x={674} $w={489} $color="#5b9bd5" />
                <ThreadLayer width="1225" height="852">
                  <path d="M549.5 70L674 768" stroke="#a9c9f0" strokeWidth="3" />
                </ThreadLayer>
                {[674, 918, 1162].map(x =>
                  [45, 417, 789].map(y =>
                    x === 918 && y === 417 ? null : <Handle key={`${x}-${y}`} $x={x} $y={y} />
                  )
                )}
                <Port $x={549.5} $y={68}>
                  <Ic w={6} h={6} color="#4d93d9"><path d="M5 0v6L1 3z" fill="#4d93d9" stroke="none" /></Ic>
                </Port>
                <Port $x={674} $y={768}>
                  <Ic w={6} h={6} color="#4d93d9"><path d="M1 0v6l4-3z" fill="#4d93d9" stroke="none" /></Ic>
                </Port>
                <Port $x={1162} $y={68} $bg="#d6dc3f" />
                <CursorMark><Cursor /></CursorMark>
              </Page>
            </CanvasArea>
            <VScroll>
              <VThumb />
              <ScrollDown><Chevron color="#8f8f8f" size={10} /></ScrollDown>
            </VScroll>
          </CanvasRow>
          <StatusBar>
            <StatusText $ml={15} $w={39}>109.5%</StatusText>
            <StatusIcon $ml={3}><Chevron /></StatusIcon>
            <StatusIcon $ml={13}>
              <Ic w={10} h={10} color="#8a8a8a"><path d="M1 1v8M9 1v8L3 5z" fill="#8a8a8a" /></Ic>
            </StatusIcon>
            <StatusIcon $ml={11}>
              <Ic w={8} h={10} color="#8a8a8a"><path d="M6 1v8L1 5z" fill="#8a8a8a" /></Ic>
            </StatusIcon>
            <PageSelect>
              <PageSelectText>A-Parent</PageSelectText>
              <PageSelectDrop><Chevron /></PageSelectDrop>
            </PageSelect>
            <StatusIcon $ml={12}>
              <Ic w={8} h={10} color="#8a8a8a"><path d="M2 1v8l5-4z" fill="#8a8a8a" /></Ic>
            </StatusIcon>
            <StatusIcon $ml={11}>
              <Ic w={10} h={10} color="#8a8a8a"><path d="M1 1v8l6-4zM9 1v8" fill="#8a8a8a" /></Ic>
            </StatusIcon>
            <StatusIcon $ml={12}>
              <Ic w={16} h={14} color="#cfcfcf" sw={2}><path d="M2 12V8a5 5 0 0 1 10 0v4M7 3v4" /></Ic>
            </StatusIcon>
            <StatusText $ml={20} $w={103}>[Basic] (working)</StatusText>
            <StatusIcon><Chevron /></StatusIcon>
            <GreenDot />
            <StatusText $ml={5} $w={63}>No errors</StatusText>
            <StatusIcon><Chevron /></StatusIcon>
            <HScroll>
              <Chevron dir="left" color="#8a8a8a" />
              <HThumb />
              <StatusIcon $ml={137}><Chevron dir="right" color="#8a8a8a" /></StatusIcon>
              <StatusIcon $ml={11}>
                <Ic w={14} h={12} color="#cfcfcf"><rect x=".5" y=".5" width="13" height="11" /><path d="M7 .5v11" /></Ic>
              </StatusIcon>
            </HScroll>
          </StatusBar>
        </DocArea>

        <Dock>
          <DockStrip $pr={6}><Double left /></DockStrip>
          <DockGroup>
            <Grip $w={19} $h={4} $m="3px 0" />
            <DockBtn $h={27}>
              <Ic w={18} h={20} color="#cfcfcf">
                <path d="M9 1l8 5-8 5-8-5z" fill="#cfcfcf" stroke="none" />
                <path d="M1 11l8 5 8-5" strokeWidth="2.5" />
              </Ic>
            </DockBtn>
            <DockBtn $h={28}>
              <Ic w={20} h={12} color="#bdbdbd" sw={2}>
                <rect x="1" y="2" width="11" height="8" rx="4" />
                <rect x="8" y="2" width="11" height="8" rx="4" />
              </Ic>
            </DockBtn>
            <DockBtn $h={22} $mt={4} $active>
              <Ic w={18} h={18} color="#dcdcdc">
                <path d="M1 5l7-4v14H1zM17 5l-7-4v14h7z" fill="#dcdcdc" stroke="none" />
                <path d="M9 0v18" />
              </Ic>
            </DockBtn>
          </DockGroup>
        </Dock>

        <RightCol>
          <DockStrip $pr={5}><Double /></DockStrip>

          <Panel $h={198}>
            <PanelTabs>
              <PanelTab $w={53} $active $left>
                <UpDown />
                Info
              </PanelTab>
              <TabTools $pr={5}><Burger /></TabTools>
            </PanelTabs>
            <InfoGrid>
              <InfoCell $right>
                <Ic w={12} h={12} color="#c8c8c8"><path d="M6 0v12M0 6h12" /></Ic>
                <InfoLines $ml={12}>
                  <InfoLine>X: 254.5 mm</InfoLine>
                  <InfoLine>Y: 128.25 mm</InfoLine>
                  <InfoLine>D:</InfoLine>
                </InfoLines>
              </InfoCell>
              <InfoCell>
                <Ic w={12} h={13} color="#c0c0c0"><path d="M.5 2.5h9v10h-9z" strokeDasharray="1.5 1" /><path d="M9.5 2.5v-2M8 1.5h3" /></Ic>
                <InfoLines $ml={8}>
                  <InfoLine>W: 51 mm</InfoLine>
                  <InfoLine $pl={2}>H: 28 mm</InfoLine>
                  <InfoLine>
                    <Ic w={12} h={11} color="#bdbdbd"><path d="M1 10L9 1l2 9z" /></Ic>
                  </InfoLine>
                </InfoLines>
              </InfoCell>
              <InfoRule />
              <InfoCell $right $pb={4}>
                <Ic w={15} h={14} color="#cfcfcf">
                  <rect x=".5" y=".5" width="11" height="12" fill="#9a9a9a" />
                  <rect x="3" y="3" width="6" height="7" fill="#ddd" stroke="none" />
                  <path d="M13 12h2v2h-2z" fill="#ccc" stroke="none" />
                </Ic>
              </InfoCell>
              <InfoCell $pb={4}>
                <Ic w={15} h={14} color="#cfcfcf" sw={2}>
                  <rect x="1" y="1" width="10" height="11" />
                  <path d="M13 12h2v2h-2z" fill="#ccc" stroke="none" />
                </Ic>
              </InfoCell>
            </InfoGrid>
          </Panel>

          <Panel $h={312}>
            <PanelTabs>
              <PanelTab $w={53}>Align</PanelTab>
              <PanelTab $w={80} $active>Pathfinder</PanelTab>
            </PanelTabs>
            <Section>
              <SectionLabel>Paths:</SectionLabel>
              <IconRow>
                {['join', 'open', 'close', 'rev'].map(k => <IconCell key={k}><PfIcon kind={k} /></IconCell>)}
              </IconRow>
            </Section>
            <Section>
              <SectionLabel>Pathfinder:</SectionLabel>
              <IconRow>
                {['add', 'sub', 'int', 'exc', 'back'].map(k => <IconCell key={k}><PfIcon kind={k} /></IconCell>)}
              </IconRow>
            </Section>
            <Section>
              <SectionLabel>Convert Shape:</SectionLabel>
              <IconRow>
                {['rect', 'round', 'bevel', 'inverse', 'ellipse', 'tri'].map(k => <IconCell key={k}><PfIcon kind={k} /></IconCell>)}
              </IconRow>
              <IconRow $mt={3}>
                {['hex', 'line', 'plus'].map(k => <IconCell key={k}><PfIcon kind={k} /></IconCell>)}
              </IconRow>
            </Section>
            <Section $last>
              <SectionLabel>Convert Point:</SectionLabel>
              <IconRow>
                {['p1', 'p2', 'p3', 'p4'].map(k => <IconCell key={k}><PfIcon kind={k} /></IconCell>)}
              </IconRow>
            </Section>
          </Panel>

          <Panel $h={234}>
            <PanelTabs $pt={2}>
              <PanelTab $w={78}>Properties</PanelTab>
              <PanelTab $w={91} $active>
                <UpDown />
                CC Libraries
              </PanelTab>
              <TabTools $pr={5}><Burger /></TabTools>
            </PanelTabs>
            <LibHead>
              <LibBack><Chevron dir="left" size={10} color="#d8d8d8" /></LibBack>
              TEST
              <LibUser>
                <Ic w={17} h={17} color="#d0d0d0">
                  <circle cx="7.5" cy="7" r="6.5" fill="#d0d0d0" stroke="none" />
                  <circle cx="7.5" cy="6" r="3" fill="#535353" stroke="none" />
                  <path d="M11 14h6M14 11v6" stroke="#e0e0e0" />
                </Ic>
              </LibUser>
            </LibHead>
            <LibSearch>
              <Ic w={12} h={12} color="#cfcfcf" sw={1.3}>
                <circle cx="5" cy="5" r="4" />
                <path d="M8 8l3.5 3.5" />
              </Ic>
              Search all libraries
              <LibSearchDrop><Chevron size={10} color="#e0e0e0" /></LibSearchDrop>
            </LibSearch>
            <LibTools>
              <Ic w={13} h={13} color="#a0a0a0"><path d="M0 0h13L8 6v7L5 10V6z" fill="#a0a0a0" stroke="none" /></Ic>
              <Ic w={14} h={14} color="#d8d8d8" sw={1.3}>
                <path d="M0 1h8M0 6h6M0 11h4M11 1v12M9 10l2 3 2-3" />
              </Ic>
              <LibSortName>/...</LibSortName>
              <Ic w={15} h={14} color="#e0e0e0" sw={2}>
                <path d="M5 2h10M5 7h10M5 12h10" />
                <rect x="0" y="0" width="4" height="4" fill="#e0e0e0" stroke="none" />
                <rect x="0" y="5" width="4" height="4" fill="#e0e0e0" stroke="none" />
                <rect x="0" y="10" width="4" height="4" fill="#e0e0e0" stroke="none" />
              </Ic>
            </LibTools>
            <LibEmpty>
              <Ic w={110} h={36} color="#cfcfcf" sw={1.4}>
                <path d="M24 0c-3 3 2 4 0 6-14-2-22 4-21 13 1 8 12 12 23 11 10-1 19-9 19-20-7 2-14 1-20 0" />
                <circle cx="13" cy="20" r="3" />
                <circle cx="21" cy="23" r="3" />
                <circle cx="29" cy="22" r="3" />
                <circle cx="36" cy="16" r="2.5" />
                <path d="M25 8h40M33 1l-8 7M66 5l-2-2" />
                <circle cx="88" cy="12" r="17" />
                <path d="M78 12h20M88 2v20" stroke="#2c7cd1" strokeWidth="1.6" />
              </Ic>
            </LibEmpty>
            <PanelFoot $bg="#585858" $pl={16} $pr={21} $gap={9}>
              <Ic w={17} h={10} color="#e0e0e0">
                <path d="M3 10a3 3 0 0 1 0-6 4 4 0 0 1 8-1 3.5 3.5 0 0 1 3 7z" fill="#e0e0e0" stroke="none" />
              </Ic>
              <FootSpacer />
              <Folder />
              <Ic w={14} h={14} color="#e0e0e0" sw={2}>
                <path d="M6 0v12M0 6h12" />
              </Ic>
              <Trash />
            </PanelFoot>
          </Panel>

          <Panel>
            <PanelTabs $pt={2}>
              <PanelTab $w={48} $left>Charac</PanelTab>
              <PanelTab $w={116} $active>
                <UpDown />
                Paragraph Styles
              </PanelTab>
              <PanelTab $w={56}>Object</PanelTab>
              <TabTools $pr={5}><Burger /></TabTools>
            </PanelTabs>
            <StyleRow $h={25} $pl={5}>
              (No Styles)
              <StyleTools>
                [a+]
                <Bolt color="#8f8f8f" />
              </StyleTools>
            </StyleRow>
            <StyleRow $h={21} $pl={35}>[Basic Paragraph]</StyleRow>
            <PanelFoot $auto $pl={8} $pr={24} $gap={13}>
              <Ic w={14} h={13} color="#8f8f8f"><rect x="2.5" y=".5" width="10" height="10" /><path d="M0 7h7l-2-2M5 9l2-2" /></Ic>
              <FootSpacer />
              <Folder />
              <Ic w={18} h={12} color="#8a8a8a"><path d="M3 0h6v12M6 0v12" /><path d="M3 0a2.5 2.5 0 0 0 0 6h3z" fill="#8a8a8a" /><path d="M12 8l4-4M12 4l4 4" /></Ic>
              <NewPage />
              <Trash />
            </PanelFoot>
          </Panel>
        </RightCol>

        <PagesPanel>
          <PanelTabs $pt={0}>
            <PanelTab $w={57}>Layers</PanelTab>
            <PanelTab $w={53}>Links</PanelTab>
            <PanelTab $w={61} $active>
              <UpDown />
              Pages
            </PanelTab>
            <TabTools $pr={6}>
              <Double />
              <TabToolSep />
              <Burger />
            </TabTools>
          </PanelTabs>
          <ParentList>
            <ParentRow $h={26}>
              <ParentName $mt={3}>[None]</ParentName>
              <WhiteSwatch />
            </ParentRow>
            <ParentRow $h={24}>
              <ParentName $mt={2} $sel>A-Parent</ParentName>
              <ParentSwatch>
                <ParentHalf />
                <ParentHalf />
              </ParentSwatch>
            </ParentRow>
          </ParentList>
          <ThumbArea>
            <ThumbSpread>
              <ThumbMarker />
              <ThumbPage>A</ThumbPage>
            </ThumbSpread>
            <ThumbNumber>1</ThumbNumber>
          </ThumbArea>
          <PanelFoot $h={25} $pl={4} $pr={25} $gap={14}>
            <PagesFootText>1 Parent</PagesFootText>
            <FootSpacer />
            <Ic w={18} h={13} color="#c8c8c8">
              <path d="M1 6h9v6H1zM7 6V1h6l3 3v6h-6" />
            </Ic>
            <NewPage />
            <Trash />
          </PanelFoot>
          <PagesHandle><Grip $w={20} $h={4} $m="0" /></PagesHandle>
        </PagesPanel>

        <ToolPanel>
          <ToolHead>
            <Double />
            <span>✕</span>
          </ToolHead>
          <Grip $w={20} $h={4} $m="3px auto" />
          {toolGroups.map((group, g) => (
            <ToolGroup key={g} $pt={g === 0 ? 0 : 2}>
              {group.map(([name, fly, active]) => (
                <Tool key={name} $fly={!!fly} $active={!!active}>{ToolIcons[name]}</Tool>
              ))}
            </ToolGroup>
          ))}
          <DefaultsRow>
            <Ic w={12} h={12}>
              <rect x="3" y="3" width="8" height="8" fill="#111" stroke="#fff" />
              <rect x="0" y="0" width="8" height="8" fill="#fff" stroke="#111" />
              <path d="M0 8L8 0" stroke="#cf1f25" />
            </Ic>
            <Ic w={12} h={12} color="#c8c8c8" sw={1.6}>
              <path d="M2 3h5a3 3 0 0 1 3 3v4M1 3l2-2M1 3l2 2M10 11l-2-2M10 11l2-2" />
            </Ic>
          </DefaultsRow>
          <SwatchStack>
            <FillChip><NoneSwatch size={19} /></FillChip>
            <StrokeChip><NoneSwatch size={19} stroke /></StrokeChip>
          </SwatchStack>
          <ModeRow>
            <ModeBtn>
              <Ic w={10} h={10} color="#d0d0d0"><rect x=".5" y=".5" width="9" height="9" /></Ic>
            </ModeBtn>
            <GhostT>T</GhostT>
          </ModeRow>
          <ToolGroup $pt={0}>
            <Tool $h={22} $active $fly>
              <NoneSwatch size={16} border={1} />
            </Tool>
            <Tool $h={31}>
              <Ic w={20} h={16} color="#a8a8a8">
                <rect x="7" y="6" width="11" height="8" fill="#b8b8b8" stroke="none" />
                <path d="M1 8h4M1 12h4M8 2v2M12 2v2M16 2v2" strokeWidth="1.5" />
              </Ic>
            </Tool>
          </ToolGroup>
          <Tool $h={22} $mt={2} $active $fly>
            <Ic w={16} h={14} color="#a8a8a8">
              <rect x=".5" y=".5" width="15" height="13" fill="#7a7a7a" stroke="#b0b0b0" />
              <path d="M4 4h3v6H4M9 4h3v6" stroke="#cfcfcf" />
            </Ic>
          </Tool>
        </ToolPanel>
      </Main>

      <BottomEdge>
        <EdgeWhite />
      </BottomEdge>
    </Root>
  );
}
